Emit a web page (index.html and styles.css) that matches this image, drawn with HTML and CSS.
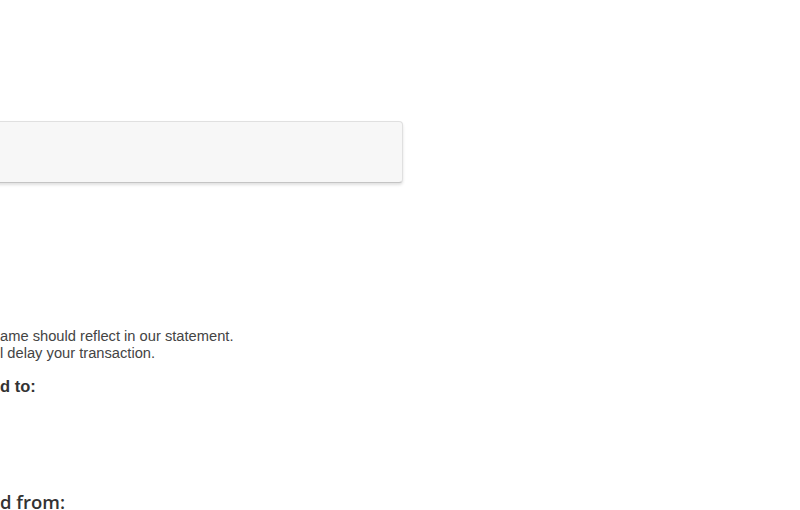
FILE: index.html
```html
<!DOCTYPE html>
<html lang="en">
<head>
  <meta charset="UTF-8" />
  <meta name="viewport" content="width=device-width, initial-scale=1.0"/>
  <title>Payment Details</title>
  <link rel="stylesheet" href="styles.css">
</head>
<body>
  <div class="page">
    <div class="well"></div>
    <div class="note">
      <p>ame should reflect in our statement.</p>
      <p>l delay your transaction.</p>
    </div>
    <h4 class="sent-to">d to:</h4>
    <h4 class="sent-from">d from:</h4>
  </div>
</body>
</html>
```

FILE: styles.css
```css
body {
  margin: 0;
  font-family: "Liberation Sans", Arial, sans-serif;
  color: #333;
  background: #fff;
}
.page {
  padding-top: 121px;
}
.well {
  margin-left: -20px;
  width: 421px;
  height: 60px;
  background-color: #f7f7f7;
  border: 1px solid #e0e0e0;
  border-bottom-color: #c4c4c4;
  border-radius: 4px;
  box-shadow: 0 2px 3px rgba(0,0,0,0.12);
}
.note {
  margin-top: 145px;
  font-size: 14.7px;
  line-height: 17px;
  color: #444;
}
.note p {
  margin: 0;
}
.sent-to {
  margin: 15px 0 0;
  font-size: 16.5px;
  font-weight: bold;
}
.sent-from {
  margin: 93px 0 0;
  font-family: "Open Sans", sans-serif;
  font-size: 18.5px;
  font-weight: 600;
}
```
